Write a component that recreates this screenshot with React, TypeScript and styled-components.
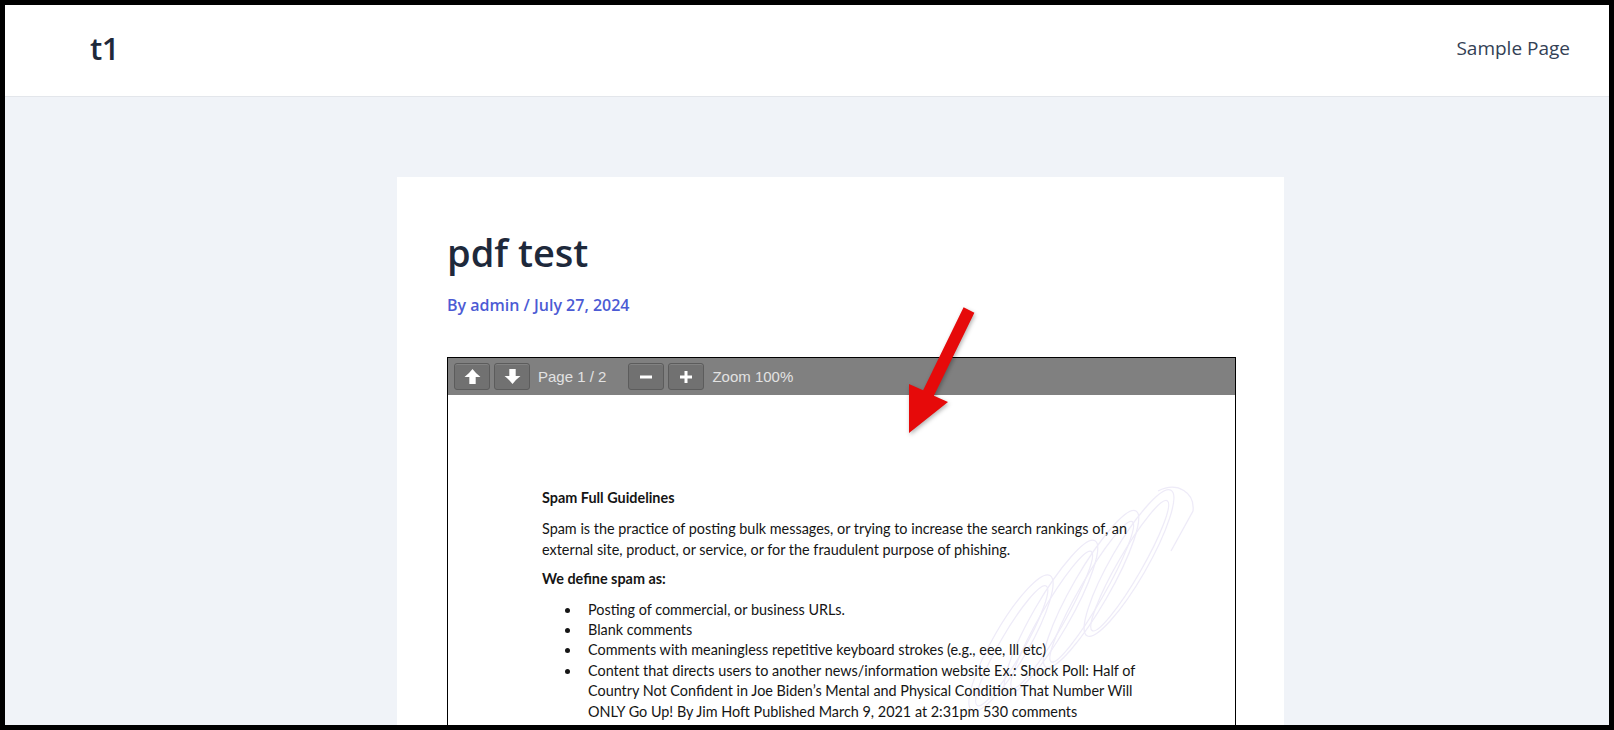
import React from 'react';
import styled, { createGlobalStyle } from 'styled-components';

const Global = createGlobalStyle`
  html, body { margin: 0; padding: 0; background: #000; }
  body { font-family: "Open Sans", "Noto Sans", sans-serif; }
  *, *::before, *::after { box-sizing: border-box; }
`;

const Frame = styled.div`
  position: relative;
  width: 1614px;
  height: 730px;
  border: 5px solid #000;
  background: #f0f3f8;
  overflow: hidden;
  display: flex;
  flex-direction: column;
`;

const Header = styled.header`
  flex: none;
  height: 92px;
  background: #fff;
  border-bottom: 1px solid #e3e6eb;
  display: flex;
  align-items: center;
  justify-content: space-between;
  padding: 0 39px 6px 85px;
`;

const Logo = styled.div`
  font-family: "Open Sans", sans-serif;
  font-size: 31px;
  font-weight: 600;
  color: #1e293b;
  letter-spacing: -0.5px;
`;

const NavLink = styled.a`
  font-family: "Open Sans", sans-serif;
  font-size: 19px;
  color: #334155;
  text-decoration: none;
`;

const Main = styled.main`
  flex: 1;
  min-height: 0;
  display: flex;
  padding: 80px 325px 0 392px;
`;

const Card = styled.article`
  flex: 1;
  background: #fff;
  padding: 51px 48px 0 50px;
  display: flex;
  flex-direction: column;
`;

const Title = styled.h1`
  margin: 0;
  font-family: "Open Sans", sans-serif;
  font-size: 38px;
  line-height: 48px;
  font-weight: 600;
  color: #1e293b;
`;

const Meta = styled.div`
  margin-top: 17px;
  font-family: "Open Sans", sans-serif;
  font-size: 16px;
  line-height: 24px;
  font-weight: 600;
  color: #4c5bd4;
`;

const Viewer = styled.div`
  margin-top: 40px;
  flex: 1;
  border: 1px solid #000;
  border-bottom: none;
  display: flex;
  flex-direction: column;
  background: #fff;
`;

const Toolbar = styled.div`
  flex: none;
  height: 37px;
  background: #808080;
  display: flex;
  align-items: center;
  gap: 4px;
  padding: 0 6px;
`;

const ToolButton = styled.button`
  width: 36px;
  height: 27px;
  padding: 0;
  border: 1px solid #5c5c5c;
  border-radius: 3px;
  background: #717171;
  box-shadow: inset 0 1px 0 rgba(255, 255, 255, 0.12);
  display: flex;
  align-items: center;
  justify-content: center;
`;

const ToolLabel = styled.span<{ $gapRight?: number }>`
  font-family: "Liberation Sans", Arial, sans-serif;
  font-size: 15px;
  color: #e2e2e2;
  margin-left: 4px;
  margin-right: ${(p) => p.$gapRight ?? 0}px;
  white-space: nowrap;
`;

const Page = styled.div`
  position: relative;
  flex: 1;
  padding: 93px 0 0 94px;
  font-family: Lato, "Open Sans", sans-serif;
  font-size: 14.4px;
  line-height: 20.4px;
  color: #151515;
  overflow: hidden;
`;

const DocLine = styled.div<{ $bold?: boolean; $after?: number }>`
  position: relative;
  white-space: nowrap;
  font-weight: ${(p) => (p.$bold ? 700 : 400)};
  margin-bottom: ${(p) => p.$after ?? 0}px;
`;

const List = styled.ul`
  position: relative;
  margin: 0;
  padding: 0;
  list-style: none;
`;

const Item = styled.li`
  display: grid;
  grid-template-columns: 46px 1fr;
  white-space: nowrap;
`;

const Dot = styled.span`
  display: flex;
  justify-content: flex-start;
  align-items: flex-start;
  padding: 8px 0 0 23px;
  &::before {
    content: '';
    width: 5px;
    height: 5px;
    border-radius: 50%;
    background: #151515;
  }
`;

const Watermark = styled.svg`
  position: absolute;
  left: 515px;
  top: 48px;
`;

const Arrow = styled.svg`
  position: absolute;
  left: 895px;
  top: 295px;
  filter: drop-shadow(1px 2px 2px rgba(0, 0, 0, 0.3));
`;

const UpIcon = () => (
  <svg width="17" height="17" viewBox="0 0 16 16">
    <path d="M8 1 Q11 5 15.5 8.5 H11 V15 H5 V8.5 H0.5 Q5 5 8 1 Z" fill="#fff" />
  </svg>
);

const DownIcon = () => (
  <svg width="17" height="17" viewBox="0 0 16 16">
    <path d="M8 15 Q11 11 15.5 7.5 H11 V1 H5 V7.5 H0.5 Q5 11 8 15 Z" fill="#fff" />
  </svg>
);

const MinusIcon = () => (
  <svg width="14" height="14" viewBox="0 0 14 14">
    <rect x="1" y="5.5" width="12" height="3" fill="#fff" />
  </svg>
);

const PlusIcon = () => (
  <svg width="14" height="14" viewBox="0 0 14 14">
    <rect x="1" y="5.5" width="12" height="3" fill="#fff" />
    <rect x="5.5" y="1" width="3" height="12" fill="#fff" />
  </svg>
);

const items: string[][] = [
  ['Posting of commercial, or business URLs.'],
  ['Blank comments'],
  ['Comments with meaningless repetitive keyboard strokes (e.g., eee, lll etc)'],
  [
    'Content that directs users to another news/information website Ex.: Shock Poll: Half of',
    'Country Not Confident in Joe Biden\u2019s Mental and Physical Condition That Number Will',
    'ONLY Go Up! By Jim Hoft Published March 9, 2021 at 2:31pm 530 comments',
  ],
];

const loops = [
  { cx: 48, cy: 200, ry: 78 },
  { cx: 88, cy: 174, ry: 88 },
  { cx: 128, cy: 146, ry: 90 },
  { cx: 166, cy: 120, ry: 84 },
];

export default function App() {
  return (
    <>
      <Global />
      <Frame>
        <Header>
          <Logo>t1</Logo>
          <NavLink href="#">Sample Page</NavLink>
        </Header>
        <Main>
          <Card>
            <Title>pdf test</Title>
            <Meta>By admin / July 27, 2024</Meta>
            <Viewer>
              <Toolbar>
                <ToolButton aria-label="Previous page"><UpIcon /></ToolButton>
                <ToolButton aria-label="Next page"><DownIcon /></ToolButton>
                <ToolLabel $gapRight={18}>Page 1 / 2</ToolLabel>
                <ToolButton aria-label="Zoom out"><MinusIcon /></ToolButton>
                <ToolButton aria-label="Zoom in"><PlusIcon /></ToolButton>
                <ToolLabel>Zoom 100%</ToolLabel>
              </Toolbar>
              <Page>
                <Watermark width="240" height="300" viewBox="0 0 240 300">
                  <g fill="none" stroke="#eeebf8" strokeWidth="1.3">
                    {loops.map((l, i) => (
                      <g key={i} transform={`rotate(30 ${l.cx} ${l.cy})`}>
                        <ellipse cx={l.cx} cy={l.cy} rx="18" ry={l.ry} />
                        <ellipse cx={l.cx + 2} cy={l.cy + 2} rx="12" ry={l.ry - 9} />
                      </g>
                    ))}
                    <path d="M195 48 C 215 38, 232 50, 230 68 L 208 108" />
                  </g>
                </Watermark>
                <DocLine $bold $after={11}>Spam Full Guidelines</DocLine>
                <DocLine>Spam is the practice of posting bulk messages, or trying to increase the search rankings of, an</DocLine>
                <DocLine $after={9}>external site, product, or service, or for the fraudulent purpose of phishing.</DocLine>
                <DocLine $bold $after={10}>We define spam as:</DocLine>
                <List>
                  {items.map((lines, i) => (
                    <Item key={i}>
                      <Dot />
                      <div>
                        {lines.map((l, j) => (
                          <DocLine key={j}>{l}</DocLine>
                        ))}
                      </div>
                    </Item>
                  ))}
                </List>
              </Page>
            </Viewer>
          </Card>
        </Main>
        <Arrow width="90" height="150" viewBox="0 0 90 150">
          <polygon
            points="63.6,7.3 74.4,12.7 33.9,95.7 48,102 9,133 9,84 23.1,90.3"
            fill="#e60a0a"
          />
        </Arrow>
      </Frame>
    </>
  );
}
